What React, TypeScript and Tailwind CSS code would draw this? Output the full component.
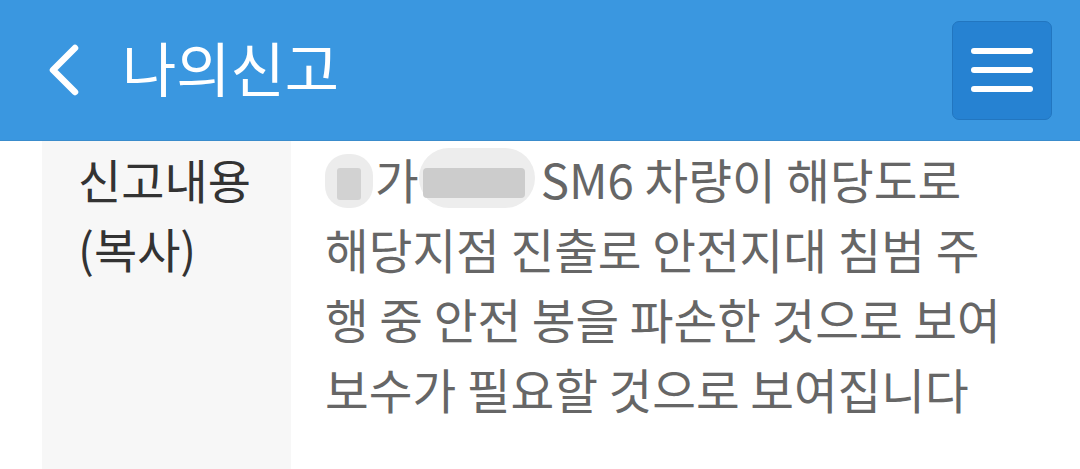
import React from "react";

export default function App() {
  const font = { fontFamily: '"Noto Sans CJK KR", "Noto Sans", sans-serif' };
  return (
    <div className="w-[1080px] h-[469px] overflow-hidden bg-white" style={font}>
      <header className="h-[141px] bg-[#3a97e0] border-b border-[#3a8ccc] flex items-center justify-between pl-[44px] pr-[28px]">
        <div className="flex items-center">
          <svg width="40" height="60" viewBox="0 0 40 60" className="mr-[38px]">
            <path d="M31 8 L9 30 L31 52" stroke="white" strokeWidth="6.5" fill="none" strokeLinecap="round" strokeLinejoin="round" />
          </svg>
          <h1 className="text-white text-[59px] leading-none pb-[8px]">나의신고</h1>
        </div>
        <button className="w-[100px] h-[99px] rounded-[7px] bg-[#2682d2] border border-[#2276c0] flex flex-col items-center justify-center gap-[13px]">
          <span className="block w-[62px] h-[6px] rounded-full bg-white" />
          <span className="block w-[62px] h-[6px] rounded-full bg-white" />
          <span className="block w-[62px] h-[6px] rounded-full bg-white" />
        </button>
      </header>
      <div className="flex h-[328px]">
        <div className="ml-[42px] w-[249px] bg-[#f7f7f7] pl-[36px] pt-[3px]">
          <p className="text-[#333] text-[47px] leading-[69px]">
            신고내용
            <br />
            (복사)
          </p>
        </div>
        <div className="pl-[34px] pt-[3px] text-[#666] text-[47.5px] leading-[70px]">
          <p className="whitespace-nowrap">
            <span className="relative inline-block w-[48px] h-[54px] align-middle rounded-[22px] bg-[#ececec] mr-[2px] -mt-[10px]">
              <span className="absolute left-[12px] top-[14px] w-[24px] h-[32px] bg-[#d2d2d2] rounded-[3px]" />
            </span>
            가
            <span className="relative inline-block w-[116px] h-[60px] align-middle rounded-[30px] bg-[#ededed] -mt-[16px] mr-[6px]">
              <span className="absolute left-[4px] top-[20px] w-[102px] h-[30px] bg-[#cccccc] rounded-[4px]" />
            </span>
            SM6 차량이 해당도로
          </p>
          <p className="whitespace-nowrap">해당지점 진출로 안전지대 침범 주</p>
          <p className="whitespace-nowrap">행 중 안전 봉을 파손한 것으로 보여</p>
          <p className="whitespace-nowrap">보수가 필요할 것으로 보여집니다</p>
        </div>
      </div>
    </div>
  );
}
